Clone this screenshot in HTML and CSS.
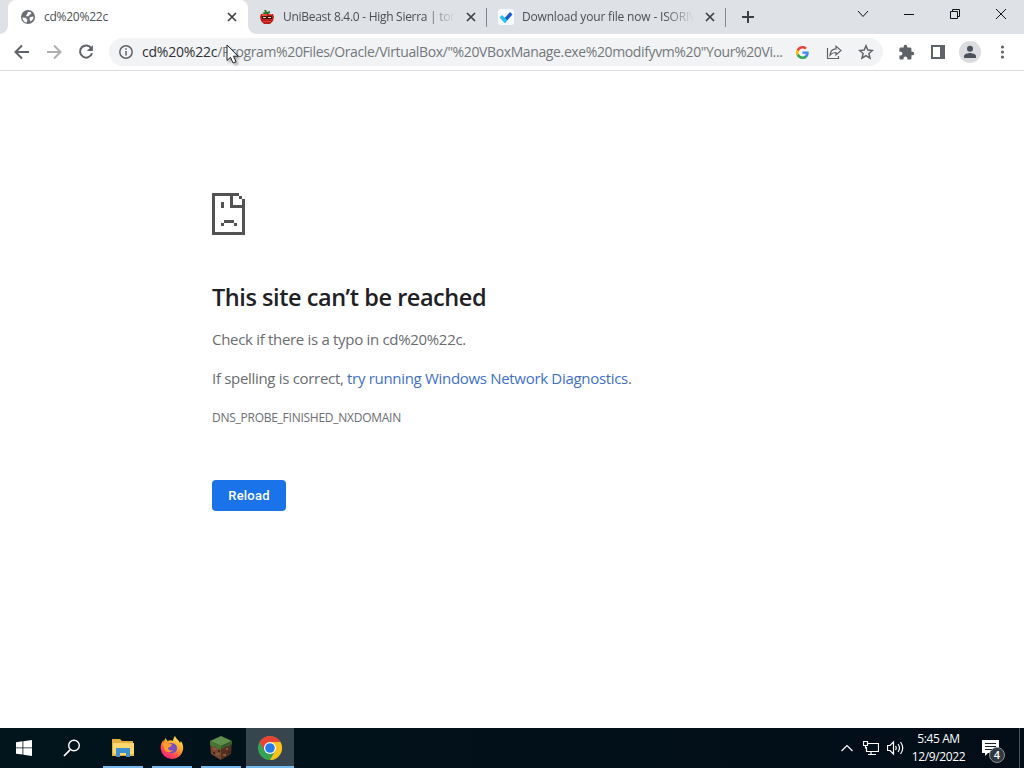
FILE: index.html
```
<!DOCTYPE html>
<html lang="en">
<head>
	<meta charset="UTF-8">
	<title>cd%20%22c</title>
	<link rel="stylesheet" href="styles.css">
</head>
<body>
	<div id="tabs">
		<div class="tab active">
			<svg class="favicon" width="16" height="16" viewBox="0 0 16 16"><circle cx="8" cy="8" r="7" fill="#6b6e72"/><path d="M2.500 8.500l3 .2 2 2-1 3C4 13 2.300 11 2.500 8.500zM8 3h2.500l1 1.500-2 1.500L8 7.500 6 7z" fill="#fff"/><path d="M10 8l3.500-.5c0 2-1 4-3 5L9.500 10z" fill="#fff"/></svg>
			<span class="title t1">cd%20%22c</span>
			<svg class="close" width="10" height="10" viewBox="0 0 10 10"><path d="M1 1l8 8M9 1L1 9"/></svg>
		</div>
		<div class="tab">
			<svg class="favicon" width="16" height="16" viewBox="0 0 16 16"><path d="M2 5h12l1 3-1 4-3 3H5l-3-3-1-4z" fill="#ba2019"/><path d="M3 5h5v2H3zM10 5h3v1h-3z" fill="#ee4935"/><path d="M3 7h10v3H3z" fill="#401a12"/><path d="M4 8h3v1H4zM9 8h3v1H9z" fill="#f3c89b"/><path d="M5 1h2l1 2 3-1v2l-2 1H5L3 4l3-1z" fill="#28722f"/><path d="M4 12h8v1H4z" fill="#df3b2d"/></svg>
			<span class="title t2 fade">UniBeast 8.4.0 - High Sierra | ton</span>
			<svg class="close" width="10" height="10" viewBox="0 0 10 10"><path d="M1 1l8 8M9 1L1 9"/></svg>
		</div>
		<div class="tab">
			<svg class="favicon" width="16" height="16" viewBox="0 0 16 16"><rect width="16" height="16" rx="3" fill="#f7faff"/><path d="M1.500 8.500L4 6l3 3-2.500 2.500z" fill="#28bff1"/><path d="M4.500 11.500L12 3l2.500 2.500L7 14z" fill="#1559d6"/><path d="M4.500 11.500L7 9l2.300 2.300L7 14z" fill="#24cdf0"/></svg>
			<span class="title t3 fade">Download your file now - ISORIV</span>
			<svg class="close" width="10" height="10" viewBox="0 0 10 10"><path d="M1 1l8 8M9 1L1 9"/></svg>
		</div>
		<svg class="plus" width="12" height="12" viewBox="0 0 12 12"><path d="M6 0v12M0 6h12"/></svg>
		<div id="win">
			<svg width="12" height="12" viewBox="0 0 12 12"><path d="M1 3l5 5.500L11 3"/></svg>
			<svg width="12" height="12" viewBox="0 0 12 12"><path d="M1 6.500h10"/></svg>
			<svg width="12" height="12" viewBox="0 0 12 12"><path d="M1.500 3.500h7v7h-7zM3.500 3.500v-2h7v7h-2"/></svg>
			<svg width="12" height="12" viewBox="0 0 12 12"><path d="M1 1l10 10M11 1L1 11"/></svg>
		</div>
	</div>

	<div id="toolbar">
		<div class="btns nav">
			<svg width="20" height="20" viewBox="0 0 20 20"><path class="line" d="M17 10H4M10 3.500L3.500 10l6.500 6.500"/></svg>
			<svg class="off" width="20" height="20" viewBox="0 0 20 20"><path class="line" d="M3 10h13M10 3.500l6.500 6.500-6.500 6.500"/></svg>
			<svg width="20" height="20" viewBox="0 0 20 20"><path class="line" d="M15.300 6.200A6.100 6.100 0 1 0 16 11.300"/><path d="M16.900 3v6h-6z"/></svg>
		</div>
		<div id="omnibox">
			<svg class="info" width="16" height="16" viewBox="0 0 16 16"><circle cx="8" cy="8" r="6.200"/><path d="M8 7v4.500M8 4.300v1.500"/></svg>
			<span class="url"><b>cd%20%22c</b>/Program%20Files/Oracle/VirtualBox/"%20VBoxManage.exe%20modifyvm%20"Your%20Vi...</span>
			<div class="btns">
				<svg width="13" height="13" viewBox="0 0 48 48"><path d="M47 24.500c0-1.600-.1-3.100-.4-4.500H24v9h13c-.6 3-2.300 5.600-4.800 7.300v6h7.700C44.400 38.100 47 32 47 24.500z" fill="#4285f4"/><path d="M24 48c6.500 0 12-2.100 15.900-5.800l-7.700-6C30 37.700 27.300 38.600 24 38.600c-6.300 0-11.500-4.200-13.400-9.900h-8v6.200C6.500 42.600 14.600 48 24 48z" fill="#34a853"/><path d="M10.600 28.700a14 14 0 0 1 0-9.200v-6.200h-8a24 24 0 0 0 0 21.500z" fill="#fbbc05"/><path d="M24 9.500c3.500 0 6.700 1.200 9.200 3.600l6.900-6.900C35.900 2.400 30.500 0 24 0 14.600 0 6.500 5.400 2.600 13.300l8 6.200C12.500 13.700 17.700 9.500 24 9.500z" fill="#ea4335"/></svg>
				<svg class="thin" width="16" height="16" viewBox="0 0 16 16"><path d="M1.500 4v10.500h11V12M4 11c.4-4 2.500-6 6-6.200V2.200L15 6.500 10 11V8.500C7.500 8.500 5.500 9.200 4 11z"/></svg>
				<svg class="thin star" width="16" height="16" viewBox="0 0 16 16"><path d="M8 1.800l1.800 4.300 4.600.4-3.500 3 1.100 4.600-4-2.500-4 2.500 1.100-4.600-3.500-3 4.600-.4z"/></svg>
			</div>
		</div>
		<div class="btns right">
			<svg width="17" height="17" viewBox="0 0 24 24"><path d="M20.500 11H19V7a2 2 0 0 0-2-2h-4V3.500a2.500 2.500 0 0 0-5 0V5H4a2 2 0 0 0-2 2v3.800h1.500a2.700 2.700 0 0 1 0 5.400H2V20c0 1.100.9 2 2 2h3.800v-1.500a2.700 2.700 0 0 1 5.400 0V22H17a2 2 0 0 0 2-2v-4h1.500a2.500 2.500 0 0 0 0-5z"/></svg>
			<svg width="16" height="16" viewBox="0 0 16 16"><path fill-rule="evenodd" d="M1 1h14v14H1zM3 3v10h7V3z"/></svg>
			<svg width="22" height="22" viewBox="0 0 22 22"><circle cx="11" cy="11" r="11" fill="#dadce0"/><circle cx="11" cy="7.800" r="3" fill="#4a515b"/><path d="M5 17v-2c0-2 4-3 6-3s6 1 6 3v2z" fill="#4a515b"/></svg>
			<svg width="16" height="16" viewBox="0 0 16 16"><circle cx="8.500" cy="3" r="1.600"/><circle cx="8.500" cy="8" r="1.600"/><circle cx="8.500" cy="13" r="1.600"/></svg>
		</div>
	</div>

	<div id="main">
		<svg class="sad" width="33" height="42" viewBox="0 0 33 42"><path fill-rule="evenodd" d="M0 0h27v3h3v3h3v36H0zM3 3v36h27V15H18V3zM21 3v9h9V6h-3V3z"/><path d="M9 9h3v6H9zM12 27h10v3H12zM9 30h3v3H9zM22 30h3v3h-3z"/></svg>
		<h1>This site can’t be reached</h1>
		<p class="p1">Check if there is a typo in cd%20%22c.</p>
		<p class="p2">If spelling is correct, <a>try running Windows Network Diagnostics</a>.</p>
		<div class="code">DNS_PROBE_FINISHED_NXDOMAIN</div>
		<button>Reload</button>
	</div>

	<div id="taskbar">
		<div class="item"><svg width="16" height="16" viewBox="0 0 16 16"><path d="M0 2.200L6.500 1.300v6.200H0zM7.300 1.200L16 0v7.500H7.300zM0 8.300h6.500v6.300L0 13.700zM7.300 8.300H16V16l-8.700-1.200z" fill="#fff"/></svg></div>
		<div class="item"><svg width="18" height="18" viewBox="0 0 18 18"><path d="M7 10.800L1 17" stroke="#fff" stroke-width="1.700"/><circle cx="11" cy="6.500" r="5.300" fill="none" stroke="#fff" stroke-width="1.400"/></svg></div>
		<div class="item open"><svg width="22" height="20" viewBox="0 0 22 20"><path d="M0 1h8l2 2h11v15H0z" fill="#e8ad3c"/><path d="M1 5h21v12H1z" fill="#fcd66f"/><path d="M4 10h14v9h-4v-4H8v4H4z" fill="#3f91cd"/><path d="M1 16h3v2H1zM18 16h4v2h-4z" fill="#e7b64f"/></svg></div>
		<div class="item open"><svg width="24" height="24" viewBox="0 0 24 24"><defs><linearGradient id="ff" x1=".8" y1="0" x2=".2" y2="1"><stop offset="0" stop-color="#fff14b"/><stop offset=".45" stop-color="#ff9827"/><stop offset=".75" stop-color="#ff405a"/><stop offset="1" stop-color="#e3208b"/></linearGradient></defs><path d="M15 0c1 3 4 4 5 7l1-2c2 3 2.500 6 2 9a11.300 11.300 0 0 1-22.300-1C.4 9 1.500 6 3.500 4v2L5.500 2l2 3c2-1 4-1 5.500 0 0-2 1-4 2-5z" fill="url(#ff)"/><path d="M8 8c3-2 8-1 9 3 .8 4-3 7-6.500 6C7 16 6 13 8 12l4-2z" fill="#7650c5"/><path d="M3 8c3-2 5 0 9 0-1 2-3 2-4 4 0 2 2 3 5 2-3 4-9 2-9-3z" fill="#ff9d2e"/></svg></div>
		<div class="item open"><svg width="24" height="24" viewBox="0 0 24 24"><path d="M1 5l11 5v14L2 18z" fill="#77482f"/><path d="M23 5l-11 5v14l10-6z" fill="#51301f"/><path d="M12 0l11 5-11 5L1 5z" fill="#608e4b"/><path d="M1 5l11 5v4l-2-2-2 1-2-3-2 1-3-2z" fill="#467632"/><path d="M23 5l-11 5v3l3-1 2-2 2 1 4-3z" fill="#385d28"/><path d="M4 12h3v2H4zM7 17h3v2H7zM17 12h2v2h-2zM14 18h3v2h-3z" fill="#8b583d"/><path d="M4 16h2v2H4zM19 15h2v2h-2zM9 14h2v2H9z" fill="#382319"/></svg></div>
		<div class="item open current"><svg width="24" height="24" viewBox="0 0 24 24"><circle cx="12" cy="12" r="12" fill="#34a353"/><path d="M1.600 6A12 12 0 0 1 22.400 6H12v12z" fill="#e94335"/><path d="M22.400 6A12 12 0 0 1 12 24l5.200-9L12 6z" fill="#fbc116"/><path d="M1.600 6L6.800 15 12 12V6z" fill="#e94335"/><circle cx="12" cy="12" r="6" fill="#fff"/><circle cx="12" cy="12" r="4.800" fill="#247be8"/></svg></div>

		<div id="tray">
			<svg width="12" height="12" viewBox="0 0 12 12"><path d="M.5 9L6 3.500 11.500 9"/></svg>
			<svg width="16" height="16" viewBox="0 0 16 16"><path d="M5 3.500h10.500v8H3.500V7M8 11.500v3M5 14.500h8M.5 1.500h4v4h-4zM2.500 5.500v3"/></svg>
			<svg width="17" height="16" viewBox="0 0 17 16"><path d="M.5 5.500H3L6.500 2v12L3 10.500H.5zM8.500 6q1.500 2 0 4M11 4q3 4 0 8M13.500 2q4.500 6 0 12"/></svg>
			<div class="clock"><span>5:45 AM</span><span class="date">12/9/2022</span></div>
			<div class="notes">
				<svg width="17" height="17" viewBox="0 0 17 17"><path d="M0 0h17v13H6l-3 3v-3H0z" fill="#fff"/><path d="M3 3.500h11M3 6.500h11M3 9.500h7" stroke="#17202b"/></svg>
				<span class="badge">4</span>
			</div>
		</div>
	</div>

	<svg id="cursor" width="14" height="21" viewBox="0 0 14 21"><path d="M1 1v15.500l3.500-3.200L7 19l3-1.300-2.500-5.500H12z" fill="#fff" stroke="#222"/></svg>
</body>
</html>
```

FILE: styles.css
```
html, body {
	margin: 0;
	padding: 0;
	height: 100%;
	overflow: hidden;
	background: #fff;
}
body {
	display: flex;
	flex-direction: column;
	font-family: "Open Sans", "Noto Sans", sans-serif;
	white-space: nowrap;
}
svg {
	display: block;
	flex: none;
}
#tabs {
	display: flex;
	height: 34px;
	padding-left: 8px;
	background: #dee1e6;
}
.tab {
	box-sizing: border-box;
	display: flex;
	align-items: center;
	width: 239px;
	padding: 0 11px;
	position: relative;
}
.tab.active {
	width: 240px;
	padding: 0 11px 0 12px;
	background: #fff;
	border-radius: 8px 8px 0 0;
}
.tab.active:before, .tab.active:after {
	content: '';
	position: absolute;
	bottom: 0;
	width: 8px;
	height: 8px;
	left: -8px;
	background: radial-gradient(circle at 0 0, transparent 7.5px, #fff 8px);
}
.tab.active:after {
	left: 240px;
	background: radial-gradient(circle at 100% 0, transparent 7.5px, #fff 8px);
}
.tab:not(.active):after {
	content: '';
	position: absolute;
	right: 0;
	top: 8px;
	width: 1px;
	height: 19px;
	background: #80868b;
}
.title {
	flex: 1;
	margin: 0 9px 0 8px;
	font-size: 12px;
	line-height: 18px;
	color: #4b4f53;
}
.fade {
	-webkit-mask-image: linear-gradient(to right, #000 82%, transparent 99%);
	mask-image: linear-gradient(to right, #000 82%, transparent 99%);
}
.t1 {
	letter-spacing: -0.25px;
}
.t2 {
	letter-spacing: -0.28px;
}
.t3 {
	letter-spacing: -0.18px;
}
.close {
	fill: none;
	stroke: #3c4043;
	stroke-width: 1.7;
}
.plus {
	margin: 11px 0 0 16px;
	stroke: #3c4043;
	stroke-width: 2;
}
#win {
	display: flex;
	margin-left: auto;
}
#win svg {
	padding: 8px 17px;
	fill: none;
	stroke: #111;
}
#toolbar {
	display: flex;
	align-items: center;
	box-sizing: border-box;
	height: 37px;
	padding: 0 5px 0 6px;
	border-bottom: 1px solid #dadce0;
	background: #fff;
}
.btns {
	display: grid;
	grid-auto-flow: column;
	grid-auto-columns: 32px;
	place-items: center;
	fill: #5f6368;
}
.line {
	fill: none;
	stroke: #5f6368;
	stroke-width: 2;
}
.off {
	opacity: .5;
}
#omnibox {
	display: flex;
	align-items: center;
	box-sizing: border-box;
	width: 774px;
	height: 28px;
	margin: 0 7px;
	padding-left: 9px;
	border-radius: 14px;
	background: #f1f3f4;
}
.info {
	fill: none;
	stroke: #5f6368;
	stroke-width: 1.5;
}
.url {
	width: 644px;
	margin-left: 8px;
	font-size: 14px;
	line-height: 20px;
	letter-spacing: -0.38px;
	color: #74787c;
}
.url b {
	font-weight: normal;
	letter-spacing: -0.2px;
	color: #303134;
}
.thin {
	fill: none;
	stroke: #5f6368;
	stroke-width: 1.2;
}
.star {
	stroke-width: 1.5;
}
#main {
	flex: 1;
	padding: 122px 0 0 212px;
	color: #6a6d71;
}
.sad {
	fill: #535353;
}
h1 {
	margin: 46px 0 0;
	font-size: 23.5px;
	line-height: 32px;
	font-weight: 600;
	letter-spacing: -0.45px;
	color: #202124;
}
p {
	margin: 15px 0 0;
	font-size: 15px;
	line-height: 24px;
	letter-spacing: -0.31px;
}
h1 + p {
	margin-top: 14px;
}
p a {
	color: #416fc9;
}
.code {
	margin-top: 18px;
	font-size: 12px;
	line-height: 20px;
	letter-spacing: -0.26px;
}
button {
	display: block;
	width: 74px;
	height: 31px;
	margin-top: 52px;
	padding: 0;
	border: none;
	border-radius: 4px;
	background: #1a73e8;
	font: 500 13px Roboto, sans-serif;
	letter-spacing: 0.2px;
	color: #fff;
}
#taskbar {
	display: flex;
	height: 40px;
	background: #020d17;
	background: linear-gradient(to right, #02141c, #020d18);
}
.item {
	box-sizing: border-box;
	display: flex;
	align-items: center;
	justify-content: center;
	width: 49px;
	position: relative;
}
.item:nth-child(1) {
	width: 48px;
}
.item:nth-child(2) {
	width: 50px;
	padding-right: 2px;
}
.open:after {
	content: '';
	position: absolute;
	left: 5px;
	bottom: 0;
	width: 40px;
	height: 2px;
	background: #76b9ed;
}
.current {
	width: 48px;
	margin-left: 1px;
	background: #37454f;
}
.current:after {
	left: 0;
	width: 48px;
}
#tray {
	display: flex;
	align-items: center;
	box-sizing: border-box;
	margin-left: auto;
	width: 183px;
	height: 40px;
	color: #fff;
}
#tray > svg {
	fill: none;
	stroke: #fff;
	stroke-width: 1.2;
	margin-right: 10px;
}
#tray > svg + svg {
	margin-right: 8px;
}
#tray > svg:nth-child(3) {
	margin-right: 8px;
}
.clock {
	display: flex;
	flex-direction: column;
	width: 53px;
	align-items: center;
	font-size: 12px;
	line-height: 18px;
	letter-spacing: -0.4px;
	margin-top: -1px;
}
.date {
	letter-spacing: -0.35px;
}
.notes {
	position: relative;
	box-sizing: border-box;
	width: 55px;
	height: 40px;
	padding: 12px 0 0 17px;
	border-right: 1px solid #48525b;
}
.badge {
	position: absolute;
	left: 24px;
	top: 19px;
	width: 14px;
	height: 14px;
	border: 1px solid #8b9196;
	border-radius: 50%;
	background: #303940;
	font-size: 11px;
	font-weight: 600;
	line-height: 14px;
	text-align: center;
}
#cursor {
	position: absolute;
	left: 226px;
	top: 44px;
	filter: drop-shadow(2px 2px 1px rgba(0, 0, 0, .3));
}
```
